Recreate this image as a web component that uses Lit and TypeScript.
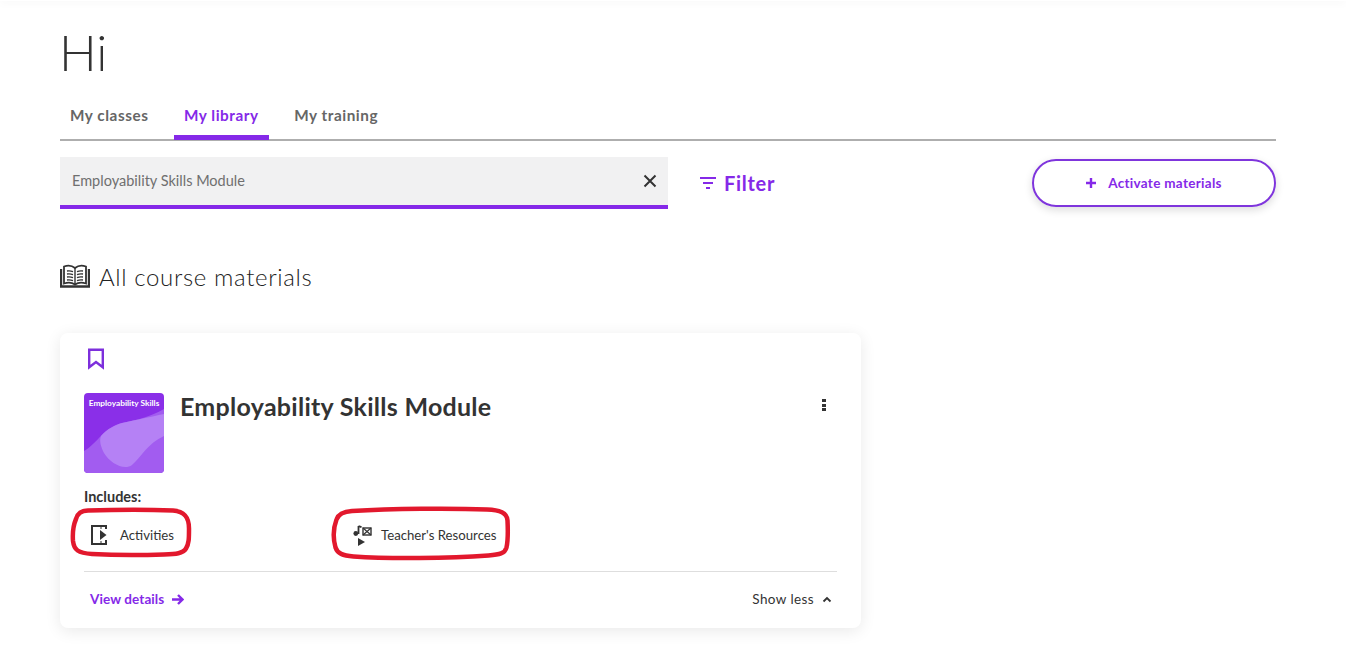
import { LitElement, html, css, svg } from "lit";
import { customElement } from "lit/decorators.js";

@customElement("app-root")
export class AppRoot extends LitElement {
  static styles = css`
    :host { display: block; height: 672px; background: #fff; font-family: "Lato", "Open Sans", sans-serif; color: #333; overflow: hidden; position: relative; }
    .topbar { height: 1px; box-shadow: 0 0 8px rgba(0,0,0,.18); }
    .page { padding: 0 70px 0 60px; }
    h1 { margin: 21px 0 0 -1px; font-size: 50px; font-weight: 300; line-height: 60px; height: 60px; color: #333; }
    .tabs { display: flex; margin-top: 17px; border-bottom: 2px solid #aeaeae; height: 40px; box-sizing: content-box; }
    .tab { padding: 0 10px; height: 39px; line-height: 32px; margin-right: 15.5px; font-size: 15.3px; font-weight: 700; letter-spacing: .55px; color: #666; box-sizing: border-box; }
    .tab.active { color: #8529e8; border-bottom: 5px solid #8529e8; margin-bottom: -1px; height: 41px; }
    .toolbar { display: flex; align-items: flex-start; margin-top: 16px; }
    .search { width: 608px; height: 52px; box-sizing: border-box; background: #f1f1f2; border-bottom: 4px solid #8529e8; display: flex; align-items: center; justify-content: space-between; padding: 0 11px 1px 12px; font-size: 14.5px; color: #6f6f6f; }
    .filter { display: flex; align-items: center; gap: 8px; margin: 13px 0 0 32px; font-size: 20px; font-weight: 700; letter-spacing: .7px; color: #8529e8; line-height: 26px; }
    .activate { margin: 2px 0 0 auto; width: 244px; height: 48px; box-sizing: border-box; border: 2px solid #7f35dc; border-radius: 24px; box-shadow: 0 3px 8px rgba(0,0,0,.14); display: flex; align-items: center; justify-content: center; gap: 12px; font-size: 13.5px; font-weight: 700; color: #8529e8; letter-spacing: .3px; }
    .section { display: flex; align-items: center; gap: 9px; margin-top: 52px; height: 30px; font-size: 24px; font-weight: 300; letter-spacing: .64px; color: #222; }
    .card { position: relative; margin-top: 42px; width: 801px; height: 295px; box-sizing: border-box; border-radius: 8px; background: #fff; box-shadow: 0 3px 16px rgba(0,0,0,.09); padding: 15px 24px 0; display: flex; flex-direction: column; }
    .bm { display: block; margin-left: 4px; height: 22px; }
    .head { display: flex; margin-top: 23px; height: 80px; }
    .thumb { display: block; width: 80px; height: 80px; border-radius: 4px; flex: none; }
    .title { margin: -2px 0 0 16px; font-size: 25px; font-weight: 700; line-height: 30px; color: #333; flex: 1; letter-spacing: .27px; }
    .dots { display: flex; flex-direction: column; gap: 1.5px; margin: 6px 11px 0 0; }
    .dots i { display: block; width: 4px; height: 3px; background: #333; }
    .includes { margin-top: 15px; font-size: 14.5px; font-weight: 700; line-height: 17px; color: #333; }
    .items { display: flex; margin-top: 14px; height: 32px; align-items: center; font-size: 13.2px; font-weight: 400; color: #333; }
    .item { display: flex; align-items: center; }
    .a { width: 260px; padding-left: 7px; box-sizing: border-box; gap: 13px; }
    .b { margin-left: 8px; gap: 9px; }
    .divider { margin-top: 20px; height: 1px; background: #dedede; margin-right: 0; }
    .foot { display: flex; justify-content: space-between; align-items: center; margin-top: 17px; padding: 0 5px 0 6px; font-size: 13.5px; font-weight: 700; line-height: 20px; letter-spacing: .1px; }
    .view { display: flex; align-items: center; gap: 8px; color: #8529e8; }
    .less { display: flex; align-items: center; gap: 8px; color: #333; font-weight: 400; letter-spacing: .4px; }
    .mark { position: absolute; left: 0; top: 0; pointer-events: none; }
  `;

  render() {
    return html`
      <div class="topbar"></div>
      <div class="page">
        <h1>Hi</h1>
        <div class="tabs">
          <div class="tab">My classes</div>
          <div class="tab active">My library</div>
          <div class="tab">My training</div>
        </div>
        <div class="toolbar">
          <div class="search">
            <span>Employability Skills Module</span>
            <svg width="14" height="14" viewBox="0 0 14 14"><path d="M1.5 1.5l11 11M12.5 1.5l-11 11" stroke="#333" stroke-width="2" fill="none"/></svg>
          </div>
          <div class="filter">
            <svg width="16" height="12" viewBox="0 0 16 12"><path d="M0 1h16M3 6h10M6 11h4" stroke="#8529e8" stroke-width="2" fill="none"/></svg>
            <span>Filter</span>
          </div>
          <div class="activate">
            <svg width="10" height="10" viewBox="0 0 10 10"><path d="M5 0v10M0 5h10" stroke="#8529e8" stroke-width="2.4" fill="none"/></svg>
            <span>Activate materials</span>
          </div>
        </div>
        <div class="section">
          <svg width="30" height="24" viewBox="0 0 30 24" fill="none" stroke="#333">
            <path d="M1 5v17.5h28V5" stroke-width="2.400"/>
            <path d="M4 2.5c4-1.5 8-1 11 1.5 3-2.500 7-3 11-1.500v17c-4-1.200-8-1-11 1-3-2-7-2.200-11-1z" stroke-width="1.800" fill="#fff"/>
            <path d="M15 4v16" stroke-width="1.400"/>
            <path d="M7 7c2-.4 4-.2 6 .6M7 10c2-.4 4-.2 6 .6M7 13c2-.4 4-.2 6 .6M7 16c2-.4 4-.2 6 .6M17 7.600c2-.8 4-1 6-.6M17 10.600c2-.8 4-1 6-.6M17 13.600c2-.8 4-1 6-.6M17 16.600c2-.8 4-1 6-.6" stroke-width="1.300"/>
          </svg>
          <span>All course materials</span>
        </div>
        <div class="card">
          <svg class="bm" width="16" height="21" viewBox="0 0 16 21"><path d="M1.200 1.200h13.600v17.600L8 13.500l-6.800 5.300z" fill="none" stroke="#7d2fdc" stroke-width="2.400"/></svg>
          <div class="head">
            <svg class="thumb" viewBox="0 0 80 80">
              <rect width="80" height="80" fill="#8a2fe8"/>
              <path d="M0 58C14 50 20 34 38 30c16-3.500 28-6 42-14v64H0z" fill="#a25cf0"/>
              <path d="M17 43c6-7 14-11 21-13 16-3.500 28-6 42-9v22c-16 7-22 20-32 29-8 6-22-2-28-12-3-6-5-12-3-17z" fill="#b581f5"/>
              <text x="40" y="13" text-anchor="middle" font-size="8.300" font-weight="700" fill="#fff" font-family="Lato, sans-serif">Employability Skills</text>
            </svg>
            <h2 class="title">Employability Skills Module</h2>
            <div class="dots"><i></i><i></i><i></i></div>
          </div>
          <div class="includes">Includes:</div>
          <div class="items">
            <div class="item a">
              <svg width="16" height="20" viewBox="0 0 16 20" fill="none">
                <path d="M15 4V1H1v18h14v-4" stroke="#333" stroke-width="2"/>
                <path d="M9 5l6.500 5L9 15z" fill="#333"/>
                <path d="M10 1v3M10 16v3" stroke="#333" stroke-width="1"/>
              </svg>
              <span>Activities</span>
            </div>
            <div class="item b">
              <svg width="20" height="21" viewBox="0 0 20 21" fill="none">
                <path d="M6.500 1v8" stroke="#333" stroke-width="1.800"/>
                <path d="M6.500 1.200l3 1" stroke="#333" stroke-width="1.800"/>
                <circle cx="3.800" cy="8.500" r="2.400" fill="#333"/>
                <rect x="11" y="3" width="8" height="7" stroke="#333" stroke-width="1.400"/>
                <path d="M11 3l8 7M19 3l-8 7" stroke="#333" stroke-width="1.200"/>
                <path d="M6 13l7 4-7 4z" fill="#333"/>
              </svg>
              <span>Teacher's Resources</span>
            </div>
          </div>
          <div class="divider"></div>
          <div class="foot">
            <div class="view">
              <span>View details</span>
              <svg width="12" height="11" viewBox="0 0 12 11" fill="none"><path d="M0 5.500h9.500M6 1l4.500 4.500L6 10" stroke="#8529e8" stroke-width="2.400"/></svg>
            </div>
            <div class="less">
              <span>Show less</span>
              <svg width="10" height="7" viewBox="0 0 10 7" fill="none"><path d="M1.500 5.500L5 2l3.500 3.500" stroke="#333" stroke-width="1.800"/></svg>
            </div>
          </div>
        </div>
      </div>
      <svg class="mark" width="1346" height="672" fill="none" stroke="#e2182d" stroke-width="4.500">
        ${svg`<path d="M88 510.500c30-1 62-1 85 0 12 1 16 7 16 18 0 10 0 15-3 20-3 5-10 5.500-22 6-28 1-55 .5-72-.5-14-1-18-4-19-13-.5-7 0-15 3-22 2-6 5-8 12-8.500z"/>`}
        ${svg`<path d="M352 511c40-2.500 100-3 135-1.500 13 .5 20 3 20.500 11 .5 10 .5 20-1 27-1.500 6-7 7-18 8-40 3-100 3.500-135 1-11-1-16-3-18-9-2.500-9-2-20 1-28 2-6 7-8 15.500-8.500z"/>`}
      </svg>
    `;
  }
}
